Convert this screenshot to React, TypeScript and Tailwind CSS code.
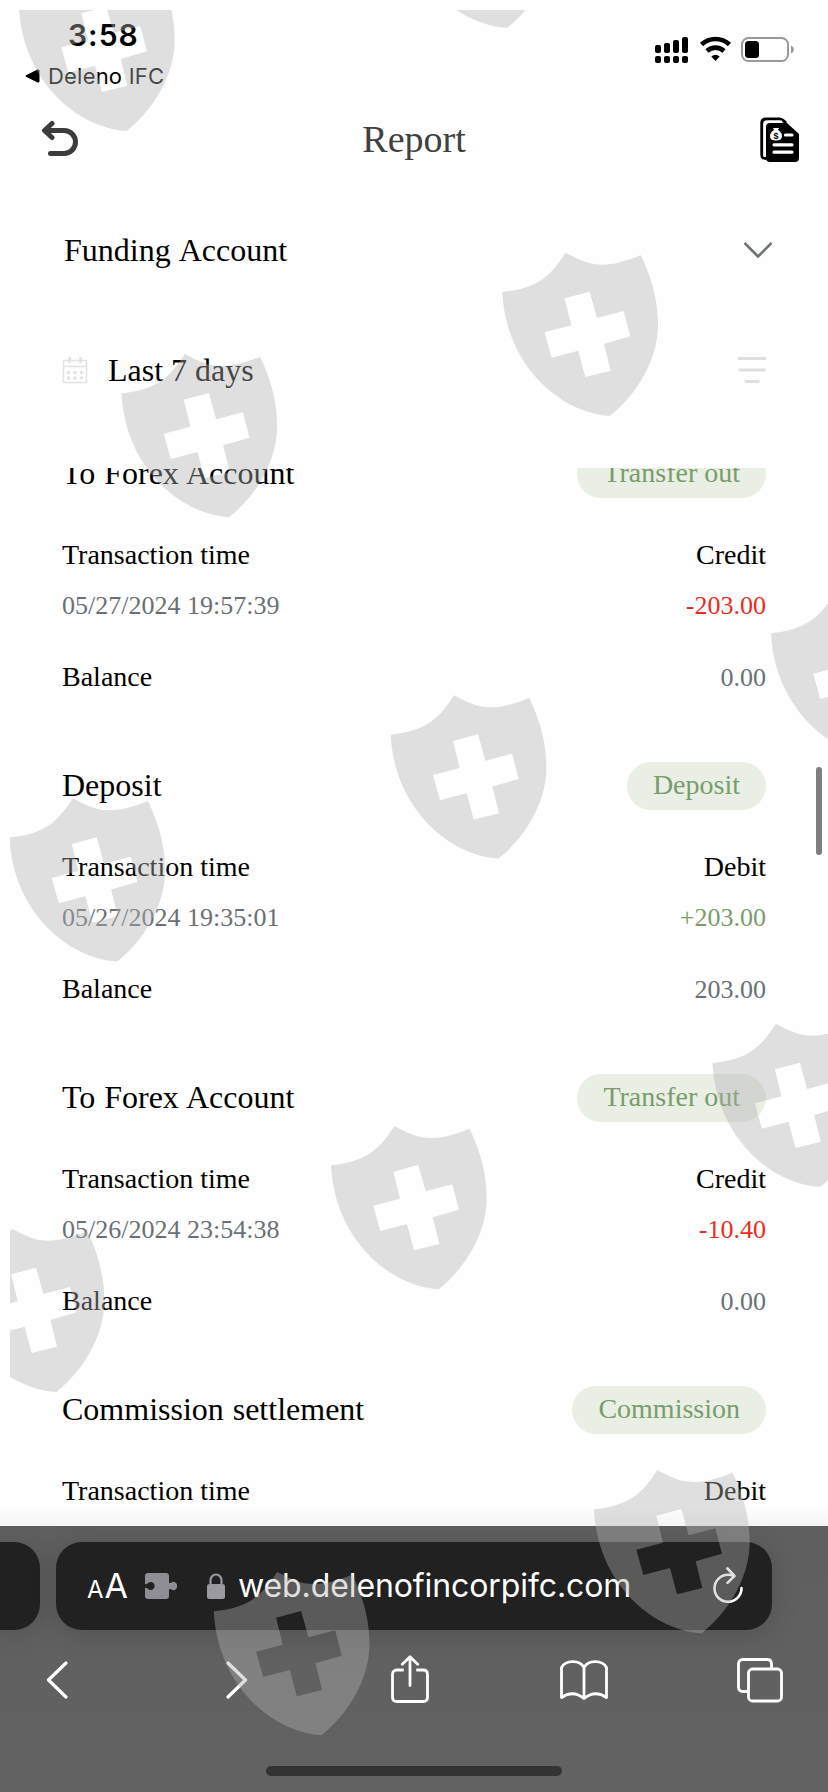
import React from "react";

type Transaction = {
  title: string;
  tag: string;
  time?: string;
  side: "Credit" | "Debit";
  amount?: string;
  balance?: string;
};

const transactions: Transaction[] = [
  {
    title: "To Forex Account",
    tag: "Transfer out",
    time: "05/27/2024 19:57:39",
    side: "Credit",
    amount: "-203.00",
    balance: "0.00",
  },
  {
    title: "Deposit",
    tag: "Deposit",
    time: "05/27/2024 19:35:01",
    side: "Debit",
    amount: "+203.00",
    balance: "203.00",
  },
  {
    title: "To Forex Account",
    tag: "Transfer out",
    time: "05/26/2024 23:54:38",
    side: "Credit",
    amount: "-10.40",
    balance: "0.00",
  },
  { title: "Commission settlement", tag: "Commission", side: "Debit" },
];

// Top-left corner of every shield on the overlay
const shields = [
  [19, -32.3],
  [399.3, -135.3],
  [502.3, 252.7],
  [121.5, 354],
  [771, 594],
  [390.7, 695.3],
  [9.4, 798.3],
  [712.5, 1023.7],
  [331, 1126],
  [-51.3, 1228.7],
  [594, 1470],
  [213.8, 1572],
];

const Watermark = () => (
  <svg
    className="absolute inset-0 pointer-events-none"
    width="828"
    height="1792"
    viewBox="0 0 828 1792"
  >
    <clipPath id="overlay">
      <rect x="10" y="10" width="818" height="1782" />
    </clipPath>
    <g clipPath="url(#overlay)" fill="#b1b1b1" fillOpacity="0.4">
      {shields.map(([x, y]) => (
        <path
          key={`${x}-${y}`}
          transform={`translate(${x} ${y}) scale(0.3333)`}
          fillRule="evenodd"
          d="M0 118C95 108 140 80 190 0C262 38 300 54 416 8C450 80 467 145 467 217C467 320 405 425 323 490C170 480 10 335 0 118ZM187 137L262 117L284 196L364 175L384 251L305 274L325 354L249 373L228 294L148 315L127 239L207 218Z"
        />
      ))}
    </g>
  </svg>
);

const StatusBar = () => (
  <div className="h-[100px] flex justify-between font-[Inter,sans-serif]">
    <div className="pt-[17px] pl-[25px]">
      <p className="pl-[43px] text-[30px] leading-9 font-semibold tracking-[1px]">
        3:58
      </p>
      <p className="mt-[9px] flex items-center text-[22px] leading-7 tracking-[0.2px]">
        <svg width="15" height="14" viewBox="0 0 15 14" className="mr-2">
          <path d="M1 6.2L12.5.6Q14.5 0 14.5 2V12Q14.5 14 12.5 13.4L1 7.8Q0 7 1 6.2Z" />
        </svg>
        Deleno IFC
      </p>
    </div>
    <svg
      className="mt-[36px] mr-[33px]"
      width="140"
      height="28"
      viewBox="0 0 140 28"
    >
      {/* Cellular */}
      <rect x="0" y="9" width="6" height="8" rx="2" />
      <rect x="9" y="7" width="6" height="10" rx="2" />
      <rect x="18" y="4" width="6" height="13" rx="2" />
      <rect x="27" y="1" width="6" height="16" rx="2" />
      <rect x="0" y="20" width="6" height="7" rx="2" />
      <rect x="9" y="20" width="6" height="7" rx="2" />
      <rect x="18" y="20" width="6" height="7" rx="2" />
      <rect x="27" y="20" width="6" height="7" rx="2" />
      {/* Wi-Fi */}
      <path
        d="M46.5 8.5A20.5 20.5 0 0 1 74.5 8.5M52 15A12.5 12.5 0 0 1 69 15"
        fill="none"
        stroke="#000"
        strokeWidth="4.6"
      />
      <path d="M56.3 20.5Q60.500 17 64.7 20.5L60.5 25Z" />
      {/* Battery */}
      <rect
        x="87"
        y="2"
        width="46"
        height="23"
        rx="6.5"
        fill="none"
        stroke="#999"
        strokeWidth="2"
      />
      <path d="M136 9.5Q139 11 139 13.5T136 17.5Z" fill="#999" />
      <rect x="90" y="5" width="14" height="17" rx="3.5" />
    </svg>
  </div>
);

const Header = () => (
  <div className="h-20 px-[28px] flex items-center justify-between">
    <svg
      className="ml-[12px]"
      width="40"
      height="40"
      viewBox="0 0 40 40"
      fill="none"
      stroke="#3c3c3c"
      strokeWidth="5"
      strokeLinecap="round"
      strokeLinejoin="round"
    >
      <path d="M12 3.5L4.5 10.5L12 17.5M5 10.5H24A11.5 11.5 0 0 1 24 33.5H10.500" />
    </svg>
    <h1 className="mr-3 -mt-[3px] text-[38px] leading-none text-[#404040]">
      Report
    </h1>
    <svg width="40" height="46" viewBox="0 0 40 46">
      <path
        d="M6 41.5Q1.800 41.5 1.800 37.5V6Q1.800 2 6 2H19Q22 2 26 6"
        fill="none"
        stroke="#000"
        strokeWidth="3"
      />
      <path d="M10 6H27L39 17V41Q39 45 35 45H10Q6 45 6 41V10Q6 6 10 6Z" />
      <path
        d="M4.6 40V8Q4.600 4.6 8 4.6H22"
        fill="none"
        stroke="#fff"
        strokeWidth="2.400"
      />
      <path
        d="M13 11H19L18 13Q22 15.500 22 19Q22 23.500 16 23.500T10 19Q10 15.500 14 13Z"
        fill="#fff"
      />
      <text
        x="16"
        y="22"
        textAnchor="middle"
        fontSize="9"
        fontWeight="700"
        fontFamily="Liberation Sans, sans-serif"
      >
        $
      </text>
      <path
        d="M25.500 18H32M14 27.800H32M14 35.200H32"
        stroke="#fff"
        strokeWidth="3.200"
        strokeLinecap="round"
      />
    </svg>
  </div>
);

const Filters = () => (
  <div className="h-[288px]">
    <div className="h-[140px] pl-16 pr-[56px] flex items-center justify-between">
      <span className="-mt-px text-[32px] leading-none [word-spacing:1.8px]">
        Funding Account
      </span>
      <svg
        width="28"
        height="16"
        viewBox="0 0 28 16"
        fill="none"
        stroke="#6f7274"
        strokeWidth="2.600"
      >
        <path d="M0.500 1L14 14.500L27.500 1" />
      </svg>
    </div>
    <div className="h-[100px] px-[62px] flex items-center">
      <svg
        width="26"
        height="28"
        viewBox="0 0 26 28"
        fill="none"
        stroke="#e2e2e2"
        strokeWidth="1.500"
      >
        <rect x="1.500" y="4.500" width="23" height="22" rx="1" />
        <path d="M1.500 10.500H24.500" />
        <path d="M7.500 1V7M18.500 1V7" strokeWidth="2.600" />
        <path
          d="M5 16.500H8.200M11.400 16.500H14.600M17.800 16.500H21M5 22H8.200M11.400 22H14.600M17.800 22H21"
          strokeWidth="3"
        />
      </svg>
      <span className="ml-5 text-[32px] leading-none">Last 7 days</span>
      <svg
        className="ml-auto"
        width="28"
        height="26"
        viewBox="0 0 28 26"
        fill="#dfdfdf"
      >
        <path d="M0 0H28V3H0ZM0 11.500H28L27 14.500H1.500ZM6 23H22L21 26H7.500Z" />
      </svg>
    </div>
  </div>
);

const TransactionCard = ({ item }: { item: Transaction }) => {
  const amountColor = item.amount?.startsWith("-")
    ? "text-[#ea2c22]"
    : "text-[#7a9c6b]";

  return (
    <div className="h-[312px] shrink-0 px-[62px]">
      <div className="h-12 flex items-center justify-between">
        <h2 className="-mt-[2px] text-[32px] leading-none [word-spacing:0.9px]">
          {item.title}
        </h2>
        <span className="h-12 px-[26px] rounded-full bg-[#e9efe4] text-[#7a9c6b] text-[28px] leading-[46px]">
          {item.tag}
        </span>
      </div>
      <div className="mt-[41px] flex justify-between text-[28px] leading-8">
        <span>Transaction time</span>
        <span>{item.side}</span>
      </div>
      {item.time && (
        <>
          <div className="mt-[19px] flex justify-between text-[26px] leading-8">
            <span className="text-[#6a7175]">{item.time}</span>
            <span className={amountColor}>{item.amount}</span>
          </div>
          <div className="mt-[39px] flex justify-between text-[28px] leading-8">
            <span>Balance</span>
            <span className="pt-px text-[26px] text-[#6a7175]">
              {item.balance}
            </span>
          </div>
        </>
      )}
    </div>
  );
};

const BrowserBar = () => (
  <div className="h-[266px] shrink-0 flex flex-col bg-linear-to-b from-[#5f5f5f] to-[#626262] text-white overflow-hidden">
    <div className="mt-4 flex gap-4">
      <div className="w-10 h-[88px] rounded-r-[26px] bg-[#212121] shadow-[0_4px_28px_rgba(0,0,0,0.16)]" />
      <div className="w-[716px] h-[88px] pl-[31px] pr-[29px] rounded-[26px] bg-[#212121] shadow-[0_4px_28px_rgba(0,0,0,0.16)] flex items-center font-[Inter,sans-serif]">
        <span className="w-[40px] flex items-baseline gap-px leading-none">
          <span className="text-[24px]">A</span>
          <span className="text-[34px]">A</span>
        </span>
        <svg
          className="ml-[18px]"
          width="32"
          height="26"
          viewBox="0 0 32 26"
          fill="#8f8e94"
        >
          <path d="M3 0H21Q24 0 24 3V9.500Q25 10.500 26 9.700A4 4 0 1 1 26 16.300Q25 15.500 24 16.500V23Q24 26 21 26H3Q0 26 0 23V15Q1.500 14.500 2.500 15.500A4 4 0 1 0 2.500 10.500Q1.500 11.500 0 11V3Q0 0 3 0Z" />
        </svg>
        <svg
          className="ml-[30px]"
          width="18"
          height="26"
          viewBox="0 0 18 26"
          fill="#9a999f"
        >
          <rect x="0" y="11" width="18" height="15" rx="2.500" />
          <path
            d="M3.500 12V7.500A5.500 6 0 0 1 14.500 7.500V12"
            fill="none"
            stroke="#9a999f"
            strokeWidth="2.200"
          />
        </svg>
        <span className="ml-[13px] text-[32px] leading-none tracking-[-0.1px] whitespace-nowrap">
          web.delenofincorpifc.com
        </span>
        <svg
          className="ml-auto -mt-[3px]"
          width="30"
          height="36"
          viewBox="0 0 30 36"
          fill="none"
          stroke="#fff"
          strokeWidth="2.600"
          strokeLinecap="round"
          strokeLinejoin="round"
        >
          <path d="M28.500 21A13.500 13.500 0 1 1 15 7.800Q18 7.800 21.500 9M14.500 1.500L21.500 8.800L14.500 15.800" />
        </svg>
      </div>
    </div>
    <div className="mt-[22px] h-[56px] pl-[46px] flex items-center">
      <svg
        width="22"
        height="38"
        viewBox="0 0 22 38"
        fill="none"
        stroke="#fff"
        strokeWidth="3.200"
        strokeLinecap="round"
        strokeLinejoin="round"
      >
        <path d="M20 2L2.500 19L20 36" />
      </svg>
      <svg
        className="ml-[158px]"
        width="22"
        height="38"
        viewBox="0 0 22 38"
        fill="none"
        stroke="#fff"
        strokeWidth="3.200"
        strokeLinecap="round"
        strokeLinejoin="round"
      >
        <path d="M2 2L19.500 19L2 36" />
      </svg>
      <svg
        className="ml-[143px]"
        width="38"
        height="50"
        viewBox="0 0 38 50"
        fill="none"
        stroke="#fff"
        strokeWidth="2.800"
      >
        <path d="M12.700 15H6Q1.500 15 1.500 19.500V42Q1.500 46.500 6 46.500H32Q36.500 46.500 36.500 42V19.500Q36.500 15 32 15H25.300" />
        <path
          d="M19 30.500V2M11.300 9.200L19 1.800L26.700 9.200"
          strokeLinecap="round"
          strokeLinejoin="round"
        />
      </svg>
      <svg
        className="ml-[131px]"
        width="48"
        height="40"
        viewBox="0 0 48 40"
        fill="none"
        stroke="#fff"
        strokeWidth="2.800"
        strokeLinecap="round"
        strokeLinejoin="round"
      >
        <path d="M24 7.500C20 0 6 -0.500 1.500 7.500V37.500Q13 29.500 24 38.500Q35 29.500 46.500 37.500V7.500C42 -0.500 28 0 24 7.500V38.500" />
      </svg>
      <svg
        className="ml-[129px]"
        width="46"
        height="45"
        viewBox="0 0 46 45"
        fill="none"
        stroke="#fff"
        strokeWidth="2.800"
      >
        <path d="M11.500 33.500H6Q1.500 33.500 1.500 29V6Q1.500 1.500 6 1.500H30Q34.500 1.500 34.500 6V11" />
        <rect x="11.500" y="11" width="33" height="32" rx="4" />
      </svg>
    </div>
    <div className="mt-[58px] mx-auto w-[296px] h-[10px] rounded-full bg-[#333]" />
  </div>
);

export default function App() {
  return (
    <div className="relative w-[828px] h-[1792px] flex flex-col overflow-hidden bg-[#fefefe] text-black font-['Liberation_Serif',serif]">
      <StatusBar />
      <Header />
      <Filters />
      <div className="relative flex-1 min-h-0 overflow-hidden">
        <div className="-mt-[18px] flex flex-col">
          {transactions.map((item, index) => (
            <TransactionCard key={index} item={item} />
          ))}
        </div>
        <div className="absolute right-[6px] top-[299px] w-[6px] h-[88px] rounded-full bg-[#7f7f7f]" />
        <div className="absolute inset-x-0 bottom-0 h-5 bg-linear-to-b from-transparent to-black/4" />
      </div>
      <BrowserBar />
      <Watermark />
    </div>
  );
}
